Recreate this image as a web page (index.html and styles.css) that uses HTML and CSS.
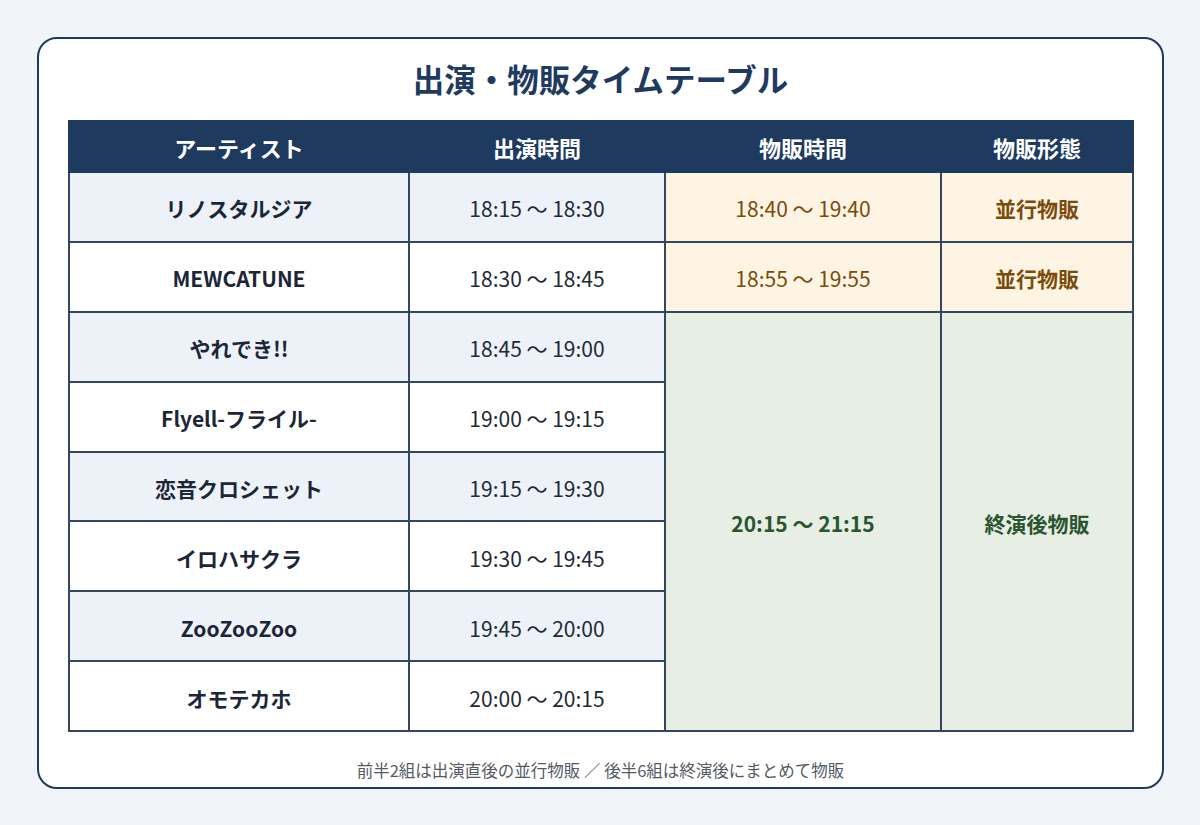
FILE: index.html
```html
<!DOCTYPE html>
<html lang="ja">
<head>
<meta charset="utf-8">
<link rel="stylesheet" href="styles.css">
</head>
<body>
<div class="card">
  <h1 class="title">出演・物販タイムテーブル</h1>
  <table class="tt">
    <colgroup>
      <col class="c1"><col class="c2"><col class="c3"><col class="c4">
    </colgroup>
    <thead>
      <tr><th>アーティスト</th><th>出演時間</th><th>物販時間</th><th>物販形態</th></tr>
    </thead>
    <tbody>
      <tr class="odd"><td class="name">リノスタルジア</td><td class="time">18:15 〜 18:30</td><td class="sale">18:40 〜 19:40</td><td class="sale kind">並行物販</td></tr>
      <tr class="even"><td class="name">MEWCATUNE</td><td class="time">18:30 〜 18:45</td><td class="sale">18:55 〜 19:55</td><td class="sale kind">並行物販</td></tr>
      <tr class="odd"><td class="name">やれでき!!</td><td class="time">18:45 〜 19:00</td><td class="after" rowspan="6">20:15 〜 21:15</td><td class="after" rowspan="6">終演後物販</td></tr>
      <tr class="even"><td class="name">Flyell-フライル-</td><td class="time">19:00 〜 19:15</td></tr>
      <tr class="odd"><td class="name">恋音クロシェット</td><td class="time">19:15 〜 19:30</td></tr>
      <tr class="even"><td class="name">イロハサクラ</td><td class="time">19:30 〜 19:45</td></tr>
      <tr class="odd"><td class="name">ZooZooZoo</td><td class="time">19:45 〜 20:00</td></tr>
      <tr class="even"><td class="name">オモテカホ</td><td class="time">20:00 〜 20:15</td></tr>
    </tbody>
  </table>
  <p class="note">前半2組は出演直後の並行物販 ／ 後半6組は終演後にまとめて物販</p>
</div>
</body>
</html>
```
FILE: styles.css
```css
html, body {
  margin: 0;
  padding: 0;
  background: #f1f5fa;
  font-family: "Noto Sans CJK JP", "Noto Sans", sans-serif;
}
.card {
  box-sizing: border-box;
  margin: 37px 0 0 37px;
  width: 1127px;
  height: 752px;
  background: #ffffff;
  border: 2px solid #1e3a5f;
  border-radius: 20px;
  padding: 0 29px;
}
.title {
  margin: 0;
  padding-top: 18px;
  height: 63px;
  line-height: 42px;
  text-align: center;
  font-size: 31.5px;
  font-weight: 700;
  color: #1e3a5f;
}
.tt {
  width: 1064px;
  border-collapse: collapse;
  table-layout: fixed;
}
.c1 { width: 340px; }
.c2 { width: 256px; }
.c3 { width: 276px; }
.c4 { width: 192px; }
.tt th {
  height: 49px;
  padding: 0;
  background: #1e3a5f;
  color: #ffffff;
  font-size: 22px;
  font-weight: 700;
  border: 2px solid #1e3a5f;
  border-left: 1px solid #3f5676;
  text-align: center;
}
.tt th:first-child { border-left: 2px solid #1e3a5f; }
.tt td {
  height: 64.9px;
  padding: 3px 0 0;
  text-align: center;
  border: 2px solid #34475f;
  font-size: 21px;
}
.odd td.name, .odd td.time { background: #edf2f9; }
.even td.name, .even td.time { background: #ffffff; }
.name { font-weight: 700; color: #1c2636; font-size: 20.5px; }
.time { font-weight: 400; color: #222a36; }
.sale { background: #fef4e4; color: #7a4b0a; font-weight: 400; }
.sale.kind { font-weight: 700; }
.after { background: #e7eee3; color: #2b5530; font-weight: 700; }
.note {
  margin: 28px 0 0;
  text-align: center;
  font-size: 16.5px;
  line-height: 20px;
  color: #555b64;
}
```
